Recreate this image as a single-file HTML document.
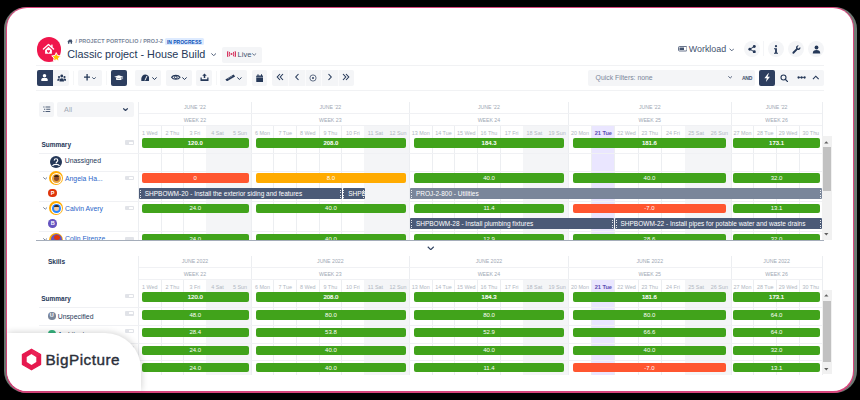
<!DOCTYPE html><html><head><meta charset="utf-8"><style>
html,body{margin:0;padding:0;}
body{width:860px;height:400px;overflow:hidden;background:#000;position:relative;font-family:"Liberation Sans", sans-serif;color:#172b4d;}
</style></head><body>
<div style="position:absolute;left:3.8px;top:7px;width:853px;height:386.4px;background:#6f7873;border-radius:22px;"></div>
<div style="position:absolute;left:6px;top:6.8px;width:848.3px;height:385.8px;background:#d9457c;border-radius:21px;"></div>
<div style="position:absolute;left:7.2px;top:8px;width:845.9px;height:383.3px;background:#fff;border-radius:20px;"></div>
<div style="position:absolute;left:36.8px;top:37.2px;width:24.2px;height:24.4px;border-radius:50%;background:#f0164c;"></div>
<svg style="position:absolute;left:42px;top:43px" width="13" height="12" viewBox="0 0 13 12">
<path d="M1.4 6 L6.5 1.4 L11.6 6" fill="none" stroke="#fff" stroke-width="1.3" stroke-linecap="round" stroke-linejoin="round"/>
<rect x="9.2" y="1.6" width="1.4" height="2.8" fill="#fff"/>
<path d="M3.1 6.9 L6.5 3.8 L9.9 6.9 V10.8 H3.1Z" fill="#fff"/>
<path d="M6.5 9.9 C4.5 8.6 4.7 7.0 5.7 7.0 C6.1 7.0 6.5 7.4 6.5 7.4 C6.5 7.4 6.9 7.0 7.3 7.0 C8.3 7.0 8.5 8.6 6.5 9.9Z" fill="#f0164c"/>
</svg>
<svg style="position:absolute;left:51.2px;top:52px" width="10.5" height="10" viewBox="0 0 24 23"><path d="M12 1.5l3.1 6.6 7.2.9-5.3 4.9 1.4 7.1L12 17.5 5.6 21l1.4-7.1L1.7 9l7.2-.9z" fill="#ffc400" stroke="#fff" stroke-width="2.2" stroke-linejoin="round"/></svg>
<svg style="position:absolute;left:67.1px;top:38.9px" width="6" height="4.9" viewBox="0 0 12 10"><path d="M6 0.3 L0.2 5 H1.8 V9.8 H4.6 V6.8 H7.4 V9.8 H10.2 V5 H11.8 L10 3.5 V0.8 H8.6 V2.3Z" fill="#42526e"/></svg>
<div style="position:absolute;left:75.50px;top:37.00px;width:100.00px;height:8.00px;line-height:8.00px;white-space:nowrap;font-size:5.4px;font-weight:bold;color:#7a869a;letter-spacing:0.08px">/ PROJECT PORTFOLIO / PROJ-2</div>
<div style="position:absolute;left:165px;top:37.5px;width:38.5px;height:7.3px;background:#deebff;border-radius:1.5px;color:#0b50b8;font-size:5px;font-weight:bold;line-height:8.4px;text-align:center;white-space:nowrap">IN PROGRESS</div>
<div style="position:absolute;left:67.30px;top:48.20px;width:150.00px;height:13.00px;line-height:13.00px;white-space:nowrap;font-size:10.8px;color:#253858;">Classic project - House Build</div>
<svg style="position:absolute;left:210.8px;top:52.6px" width="5.4" height="3.4" viewBox="0 0 10 6"><path d="M1.2 1.2 L5 4.8 L8.8 1.2" fill="none" stroke="#42526e" stroke-width="1.7" stroke-linecap="round"/></svg>
<div style="position:absolute;left:222px;top:46.8px;width:40px;height:15.8px;background:#f4f5f7;border-radius:2px"></div>
<svg style="position:absolute;left:227.4px;top:50.8px" width="9" height="6.2" viewBox="0 0 9 6.2">
<circle cx="4.5" cy="3.1" r="1" fill="#d6335e"/>
<path d="M2.6 0.9 Q1.6 3.1 2.6 5.3 M6.4 0.9 Q7.4 3.1 6.4 5.3" fill="none" stroke="#d6335e" stroke-width="1.1"/>
<path d="M1 0.3 Q-0.3 3.1 1 5.9 M8 0.3 Q9.3 3.1 8 5.9" fill="none" stroke="#d6335e" stroke-width="1.1"/>
</svg>
<div style="position:absolute;left:237.60px;top:47.00px;width:20.00px;height:15.00px;line-height:15.00px;white-space:nowrap;font-size:7.6px;color:#42526e;">Live</div>
<svg style="position:absolute;left:252.3px;top:53.4px" width="4.4" height="3" viewBox="0 0 10 6"><path d="M1.2 1.2 L5 4.8 L8.8 1.2" fill="none" stroke="#42526e" stroke-width="1.8" stroke-linecap="round"/></svg>
<svg style="position:absolute;left:677.5px;top:46px" width="9.5" height="5.5" viewBox="0 0 19 11"><rect x="1" y="1" width="17" height="9" rx="2" fill="none" stroke="#42526e" stroke-width="1.6"/><rect x="3" y="3" width="9" height="5" fill="#42526e"/></svg>
<div style="position:absolute;left:688.80px;top:41.70px;width:45.00px;height:15.00px;line-height:15.00px;white-space:nowrap;font-size:8.9px;color:#42526e;">Workload</div>
<svg style="position:absolute;left:728.5px;top:47.7px" width="5.5" height="3.5" viewBox="0 0 10 6"><path d="M1 1 L5 5 L9 1" fill="none" stroke="#42526e" stroke-width="1.6"/></svg>
<div style="position:absolute;left:743.6px;top:40.5px;width:16px;height:16px;border-radius:50%;background:#f4f5f7"></div>
<div style="position:absolute;left:768px;top:40.5px;width:16px;height:16px;border-radius:50%;background:#f4f5f7"></div>
<div style="position:absolute;left:788px;top:40.5px;width:16px;height:16px;border-radius:50%;background:#f4f5f7"></div>
<div style="position:absolute;left:808px;top:40.5px;width:16px;height:16px;border-radius:50%;background:#f4f5f7"></div>
<div style="position:absolute;left:763.20px;top:41.00px;width:0.80px;height:15.00px;background:#f4f5f7"></div>
<svg style="position:absolute;left:747.6px;top:45px" width="8.4" height="8.4" viewBox="0 0 16 16"><circle cx="12" cy="3" r="2.8" fill="#253858"/><circle cx="12" cy="13" r="2.8" fill="#253858"/><circle cx="3.5" cy="8" r="2.8" fill="#253858"/><path d="M12 3 L3.5 8 L12 13" fill="none" stroke="#253858" stroke-width="1.8"/></svg>
<svg style="position:absolute;left:773px;top:44.8px" width="6" height="9" viewBox="0 0 6 9"><circle cx="3" cy="1.2" r="1.1" fill="#253858"/><path d="M1 3.3 H3.9 V7.8 H5 V8.8 H1 V7.8 H2.1 V4.3 H1Z" fill="#253858"/></svg>
<svg style="position:absolute;left:791.5px;top:44.8px" width="9" height="9" viewBox="0 0 16 16"><path d="M14.5 3.5 L12 6 L10 5.6 L9.6 3.6 L12.1 1.1 C10 0.3 7.6 1.5 7.2 3.8 C7 4.7 7.2 5.5 7.5 6.2 L1.2 12.5 C0.5 13.2 0.5 14.3 1.2 15 C1.9 15.6 3 15.6 3.6 15 L9.9 8.6 C10.6 9 11.5 9.1 12.3 8.9 C14.5 8.4 15.5 5.8 14.5 3.5Z" fill="#253858"/></svg>
<svg style="position:absolute;left:811.5px;top:44.8px" width="9" height="9" viewBox="0 0 18 18"><circle cx="9" cy="5" r="3.8" fill="#253858"/><path d="M1.5 17 C1.5 11.5 4.5 10.2 9 10.2 C13.5 10.2 16.5 11.5 16.5 17Z" fill="#253858"/></svg>
<div style="position:absolute;left:36.00px;top:64.90px;width:788.00px;height:1.00px;background:#f1f2f4"></div>
<div style="position:absolute;left:36.00px;top:89.90px;width:788.00px;height:1.00px;background:#f1f2f4"></div>
<div style="position:absolute;left:37px;top:70px;width:32.00px;height:15.8px;background:#f4f5f7;border-radius:2px"></div>
<div style="position:absolute;left:36.7px;top:69.8px;width:16.2px;height:16.1px;background:#2d3e5f;border-radius:2px 0 0 2px"></div>
<svg style="position:absolute;left:41.3px;top:73.9px" width="7" height="7" viewBox="0 0 7 7"><circle cx="3.5" cy="1.75" r="1.75" fill="#fff"/><path d="M0.3 7 V5.6 C0.3 4.5 1.2 4 2.1 4 H4.9 C5.8 4 6.7 4.5 6.7 5.6 V7Z" fill="#fff"/></svg>
<svg style="position:absolute;left:56.5px;top:73.5px" width="9.5" height="8.5" viewBox="0 0 19 17"><circle cx="9.5" cy="4" r="2.8" fill="#253858"/><circle cx="4" cy="6" r="2.2" fill="#253858"/><circle cx="15" cy="6" r="2.2" fill="#253858"/><path d="M5 15 C5 10.5 6.5 8.5 9.5 8.5 C12.5 8.5 14 10.5 14 15Z" fill="#253858"/><path d="M0.5 13.5 C0.5 10 2 9 4 9 C5 9 5.5 9.3 5.8 9.6 C4.9 10.8 4.5 12 4.5 13.5Z M18.5 13.5 C18.5 10 17 9 15 9 C14 9 13.5 9.3 13.2 9.6 C14.1 10.8 14.5 12 14.5 13.5Z" fill="#253858"/></svg>
<div style="position:absolute;left:73.40px;top:71.00px;width:0.80px;height:14.00px;background:#f5f6f7"></div>
<div style="position:absolute;left:78px;top:70px;width:24.00px;height:15.8px;background:#f4f5f7;border-radius:2px"></div>
<svg style="position:absolute;left:84px;top:74.4px" width="6.2" height="6.4" viewBox="0 0 6.2 6.4"><path d="M3.1 0 V6.4 M0 3.2 H6.2" stroke="#253858" stroke-width="1.3"/></svg>
<svg style="position:absolute;left:92.1px;top:76.9px" width="4" height="2.6" viewBox="0 0 10 6"><path d="M1.2 1.2 L5 4.8 L8.8 1.2" fill="none" stroke="#253858" stroke-width="2.0" stroke-linecap="round" stroke-linejoin="round"/></svg>
<div style="position:absolute;left:106.20px;top:71.00px;width:0.80px;height:14.00px;background:#f5f6f7"></div>
<div style="position:absolute;left:111px;top:70px;width:16.00px;height:15.8px;background:#2d3e5f;border-radius:2px"></div>
<svg style="position:absolute;left:114.4px;top:74.8px" width="9.6" height="5.6" viewBox="0 0 19.2 11.2"><path d="M9.6 0.4 L18.8 3.6 L9.6 6.8 L0.4 3.6Z" fill="#fff"/><path d="M4.2 5.6 V9 C4.2 10.2 7 10.9 9.6 10.9 C12.2 10.9 15 10.2 15 9 V5.6 L9.6 7.6Z" fill="#fff"/><path d="M17.2 4.2 V8.4" stroke="#fff" stroke-width="1.1"/></svg>
<div style="position:absolute;left:135.2px;top:70px;width:25.60px;height:15.8px;background:#f4f5f7;border-radius:2px"></div>
<svg style="position:absolute;left:140.8px;top:73.8px" width="8.6" height="7.2" viewBox="0 0 17.2 14.4"><path d="M0.6 13.8 V9.5 C0.6 4.6 4.3 0.8 8.6 0.8 C12.9 0.8 16.6 4.6 16.6 9.5 V13.8Z" fill="#253858"/><path d="M8.2 12.2 L11.6 4.6" stroke="#f4f5f7" stroke-width="2" stroke-linecap="round"/></svg>
<svg style="position:absolute;left:151.5px;top:77px" width="5" height="3.2" viewBox="0 0 10 6"><path d="M1.2 1.2 L5 4.8 L8.8 1.2" fill="none" stroke="#253858" stroke-width="2.0" stroke-linecap="round" stroke-linejoin="round"/></svg>
<div style="position:absolute;left:165.5px;top:70px;width:26.10px;height:15.8px;background:#f4f5f7;border-radius:2px"></div>
<svg style="position:absolute;left:171px;top:74.3px" width="9.6" height="6.6" viewBox="0 0 19.2 13.2"><path d="M1.2 6.6 C4.2 1.4 15 1.4 18 6.6 C15 11.8 4.2 11.8 1.2 6.6Z" fill="none" stroke="#253858" stroke-width="2.4"/><circle cx="9.6" cy="6.6" r="2.6" fill="none" stroke="#253858" stroke-width="2"/></svg>
<svg style="position:absolute;left:181.7px;top:77px" width="5" height="3.2" viewBox="0 0 10 6"><path d="M1.2 1.2 L5 4.8 L8.8 1.2" fill="none" stroke="#253858" stroke-width="2.0" stroke-linecap="round" stroke-linejoin="round"/></svg>
<div style="position:absolute;left:196px;top:70px;width:16.00px;height:15.8px;background:#f4f5f7;border-radius:2px"></div>
<svg style="position:absolute;left:199.5px;top:73.3px" width="9" height="8.5" viewBox="0 0 18 17"><path d="M9 1 L4.5 5.5 H7.5 V10 H10.5 V5.5 H13.5Z" fill="#253858"/><path d="M1 9 V16 H17 V9 H14.5 V12.5 H3.5 V9Z" fill="#253858"/></svg>
<div style="position:absolute;left:215.50px;top:71.00px;width:0.80px;height:14.00px;background:#f5f6f7"></div>
<div style="position:absolute;left:220.2px;top:70px;width:27.10px;height:15.8px;background:#f4f5f7;border-radius:2px"></div>
<svg style="position:absolute;left:225.3px;top:73.6px" width="10.5" height="7.6" viewBox="0 0 21 15.2"><path d="M0.8 10.8 L17.2 1 L20.2 5.2 L3.8 14.6Z" fill="#253858"/><path d="M6.2 8.4 L7.4 10.2 M9.6 6.4 L10.8 8.2 M13 4.4 L14.2 6.2" stroke="#f4f5f7" stroke-width="1"/></svg>
<svg style="position:absolute;left:237.3px;top:76.6px" width="4.8" height="3.2" viewBox="0 0 10 6"><path d="M1.2 1.2 L5 4.8 L8.8 1.2" fill="none" stroke="#253858" stroke-width="2.0" stroke-linecap="round" stroke-linejoin="round"/></svg>
<div style="position:absolute;left:251.6px;top:70px;width:15.70px;height:15.8px;background:#f4f5f7;border-radius:2px"></div>
<svg style="position:absolute;left:255.7px;top:73.5px" width="7.5" height="8.5" viewBox="0 0 15 17"><rect x="0.5" y="3" width="14" height="13.5" rx="1.5" fill="#253858"/><rect x="3" y="0.5" width="2" height="4" fill="#253858"/><rect x="10" y="0.5" width="2" height="4" fill="#253858"/><rect x="0.5" y="5.8" width="14" height="1" fill="#f4f5f7"/></svg>
<div style="position:absolute;left:272.2px;top:70px;width:81.80px;height:15.8px;background:#f4f5f7;border-radius:2px"></div>
<div style="position:absolute;left:288.00px;top:70.00px;width:1.00px;height:15.80px;background:#fbfbfc"></div>
<div style="position:absolute;left:304.50px;top:70.00px;width:1.00px;height:15.80px;background:#fbfbfc"></div>
<div style="position:absolute;left:321.00px;top:70.00px;width:1.00px;height:15.80px;background:#fbfbfc"></div>
<div style="position:absolute;left:337.50px;top:70.00px;width:1.00px;height:15.80px;background:#fbfbfc"></div>
<svg style="position:absolute;left:275.8px;top:73.3px" width="8" height="8" viewBox="0 0 16 16"><path d="M8 2 L2.5 8 L8 14 M14 2 L8.5 8 L14 14" fill="none" stroke="#253858" stroke-width="2.2"/></svg>
<svg style="position:absolute;left:293.5px;top:73.3px" width="6" height="8" viewBox="0 0 12 16"><path d="M9 2 L3.5 8 L9 14" fill="none" stroke="#253858" stroke-width="2.2"/></svg>
<svg style="position:absolute;left:308.6px;top:73.5px" width="8" height="8" viewBox="0 0 16 16"><circle cx="8" cy="8" r="6.2" fill="none" stroke="#253858" stroke-width="1.4"/><circle cx="8" cy="8" r="1.9" fill="#253858"/></svg>
<svg style="position:absolute;left:326.5px;top:73.3px" width="6" height="8" viewBox="0 0 12 16"><path d="M3 2 L8.5 8 L3 14" fill="none" stroke="#253858" stroke-width="2.2"/></svg>
<svg style="position:absolute;left:341.5px;top:73.3px" width="8" height="8" viewBox="0 0 16 16"><path d="M2 2 L7.5 8 L2 14 M8 2 L13.5 8 L8 14" fill="none" stroke="#253858" stroke-width="2.2"/></svg>
<div style="position:absolute;left:588.3px;top:70px;width:166.6px;height:15.5px;background:#f4f5f7;border-radius:2px"></div>
<div style="position:absolute;left:595.60px;top:70.00px;width:60.00px;height:15.50px;line-height:15.50px;white-space:nowrap;font-size:6.85px;color:#7a869a;">Quick Filters: none</div>
<svg style="position:absolute;left:727.6px;top:76.4px" width="4.4" height="2.6" viewBox="0 0 10 6"><path d="M1.2 1.2 L5 4.8 L8.8 1.2" fill="none" stroke="#42526e" stroke-width="2.0" stroke-linecap="round" stroke-linejoin="round"/></svg>
<div style="position:absolute;left:739.30px;top:70.60px;width:15.50px;height:15.50px;line-height:15.50px;white-space:nowrap;font-size:5px;font-weight:bold;color:#42526e;text-align:center;letter-spacing:-0.2px">AND</div>
<div style="position:absolute;left:759px;top:70px;width:65px;height:15.8px;background:#f4f5f7;border-radius:2px"></div>
<div style="position:absolute;left:759px;top:70px;width:15.8px;height:15.8px;background:#2d3e5f;border-radius:2px"></div>
<svg style="position:absolute;left:763.6px;top:72.8px" width="6.4" height="9.2" viewBox="0 0 12.8 18.4"><path d="M8.6 0.4 L0.8 10.4 H5.6 L3.8 18 L12 7.6 H7.2 L9.8 0.4Z" fill="#fff"/></svg>
<svg style="position:absolute;left:779.7px;top:73.8px" width="8.5" height="8.5" viewBox="0 0 17 17"><circle cx="7" cy="7" r="5" fill="none" stroke="#253858" stroke-width="2.2"/><path d="M10.5 10.5 L15.5 15.5" stroke="#253858" stroke-width="2.4" stroke-linecap="round"/></svg>
<svg style="position:absolute;left:797.2px;top:75.9px" width="9.2" height="3" viewBox="0 0 18 6"><circle cx="3" cy="3" r="2.3" fill="#253858"/><circle cx="9" cy="3" r="2.3" fill="#253858"/><circle cx="15" cy="3" r="2.3" fill="#253858"/><path d="M3 3 H15" stroke="#253858" stroke-width="1.4"/></svg>
<svg style="position:absolute;left:812px;top:74.8px" width="7.6" height="4.8" viewBox="0 0 16 10"><path d="M2 8.5 L8 2.5 L14 8.5" fill="none" stroke="#253858" stroke-width="2.4"/></svg>
<div style="position:absolute;left:39.1px;top:101.7px;width:15px;height:15px;background:#f4f5f7;border-radius:2px"></div>
<svg style="position:absolute;left:43px;top:105.5px" width="7.5" height="6.5" viewBox="0 0 15 13"><path d="M5 2 H14.5 M6.5 6.5 H14.5 M5 11 H14.5" stroke="#253858" stroke-width="1.6"/><path d="M0.5 2 H3 M2 6.5 H4.5 M0.5 11 H3" stroke="#253858" stroke-width="1.6"/></svg>
<div style="position:absolute;left:57px;top:101.7px;width:77px;height:15px;background:#f4f5f7;border-radius:2px"></div>
<div style="position:absolute;left:64.10px;top:101.90px;width:20.00px;height:15.00px;line-height:15.00px;white-space:nowrap;font-size:7.2px;color:#a0a8b5;">All</div>
<svg style="position:absolute;left:123.3px;top:107.8px" width="5" height="3.2" viewBox="0 0 10 6"><path d="M1.2 1.2 L5 4.8 L8.8 1.2" fill="none" stroke="#344563" stroke-width="2.4" stroke-linecap="round" stroke-linejoin="round"/></svg>
<div style="position:absolute;left:206.18px;top:125.50px;width:22.56px;height:114.50px;background:#f4f5f7"></div>
<div style="position:absolute;left:228.74px;top:125.50px;width:22.56px;height:114.50px;background:#f4f5f7"></div>
<div style="position:absolute;left:364.16px;top:125.50px;width:22.57px;height:114.50px;background:#f4f5f7"></div>
<div style="position:absolute;left:386.73px;top:125.50px;width:22.57px;height:114.50px;background:#f4f5f7"></div>
<div style="position:absolute;left:523.01px;top:125.50px;width:22.74px;height:114.50px;background:#f4f5f7"></div>
<div style="position:absolute;left:545.76px;top:125.50px;width:22.74px;height:114.50px;background:#f4f5f7"></div>
<div style="position:absolute;left:591.71px;top:125.50px;width:23.21px;height:114.50px;background:#eae6ff"></div>
<div style="position:absolute;left:684.57px;top:125.50px;width:23.21px;height:114.50px;background:#f4f5f7"></div>
<div style="position:absolute;left:707.79px;top:125.50px;width:23.21px;height:114.50px;background:#f4f5f7"></div>
<div style="position:absolute;left:138.00px;top:102.00px;width:1.00px;height:138.00px;background:#eceef1"></div>
<div style="position:absolute;left:250.80px;top:102.00px;width:1.00px;height:138.00px;background:#eceef1"></div>
<div style="position:absolute;left:408.80px;top:102.00px;width:1.00px;height:138.00px;background:#eceef1"></div>
<div style="position:absolute;left:568.00px;top:102.00px;width:1.00px;height:138.00px;background:#eceef1"></div>
<div style="position:absolute;left:730.50px;top:102.00px;width:1.00px;height:138.00px;background:#eceef1"></div>
<div style="position:absolute;left:821.70px;top:102.00px;width:1.00px;height:138.00px;background:#eceef1"></div>
<div style="position:absolute;left:138.50px;top:113.00px;width:683.70px;height:1.00px;background:#f0f1f4"></div>
<div style="position:absolute;left:138.50px;top:125.00px;width:683.70px;height:1.00px;background:#f0f1f4"></div>
<div style="position:absolute;left:160.56px;top:125.50px;width:1.00px;height:114.50px;background:#eceef1"></div>
<div style="position:absolute;left:183.12px;top:125.50px;width:1.00px;height:114.50px;background:#eceef1"></div>
<div style="position:absolute;left:273.37px;top:125.50px;width:1.00px;height:114.50px;background:#eceef1"></div>
<div style="position:absolute;left:295.94px;top:125.50px;width:1.00px;height:114.50px;background:#eceef1"></div>
<div style="position:absolute;left:318.51px;top:125.50px;width:1.00px;height:114.50px;background:#eceef1"></div>
<div style="position:absolute;left:341.09px;top:125.50px;width:1.00px;height:114.50px;background:#eceef1"></div>
<div style="position:absolute;left:431.54px;top:125.50px;width:1.00px;height:114.50px;background:#eceef1"></div>
<div style="position:absolute;left:454.29px;top:125.50px;width:1.00px;height:114.50px;background:#eceef1"></div>
<div style="position:absolute;left:477.03px;top:125.50px;width:1.00px;height:114.50px;background:#eceef1"></div>
<div style="position:absolute;left:499.77px;top:125.50px;width:1.00px;height:114.50px;background:#eceef1"></div>
<div style="position:absolute;left:591.21px;top:125.50px;width:1.00px;height:114.50px;background:#eceef1"></div>
<div style="position:absolute;left:614.43px;top:125.50px;width:1.00px;height:114.50px;background:#eceef1"></div>
<div style="position:absolute;left:637.64px;top:125.50px;width:1.00px;height:114.50px;background:#eceef1"></div>
<div style="position:absolute;left:660.86px;top:125.50px;width:1.00px;height:114.50px;background:#eceef1"></div>
<div style="position:absolute;left:753.30px;top:125.50px;width:1.00px;height:114.50px;background:#eceef1"></div>
<div style="position:absolute;left:776.10px;top:125.50px;width:1.00px;height:114.50px;background:#eceef1"></div>
<div style="position:absolute;left:798.90px;top:125.50px;width:1.00px;height:114.50px;background:#eceef1"></div>
<div style="position:absolute;left:138.50px;top:102.00px;width:112.80px;height:11.50px;line-height:11.50px;white-space:nowrap;text-align:center;font-size:5.2px;color:#a0a8b4;">JUNE '22</div>
<div style="position:absolute;left:138.50px;top:113.50px;width:112.80px;height:12.00px;line-height:12.00px;white-space:nowrap;text-align:center;font-size:5.2px;color:#a0a8b4;">WEEK 22</div>
<div style="position:absolute;left:251.30px;top:102.00px;width:158.00px;height:11.50px;line-height:11.50px;white-space:nowrap;text-align:center;font-size:5.2px;color:#a0a8b4;">JUNE '22</div>
<div style="position:absolute;left:251.30px;top:113.50px;width:158.00px;height:12.00px;line-height:12.00px;white-space:nowrap;text-align:center;font-size:5.2px;color:#a0a8b4;">WEEK 23</div>
<div style="position:absolute;left:409.30px;top:102.00px;width:159.20px;height:11.50px;line-height:11.50px;white-space:nowrap;text-align:center;font-size:5.2px;color:#a0a8b4;">JUNE '22</div>
<div style="position:absolute;left:409.30px;top:113.50px;width:159.20px;height:12.00px;line-height:12.00px;white-space:nowrap;text-align:center;font-size:5.2px;color:#a0a8b4;">WEEK 24</div>
<div style="position:absolute;left:568.50px;top:102.00px;width:162.50px;height:11.50px;line-height:11.50px;white-space:nowrap;text-align:center;font-size:5.2px;color:#a0a8b4;">JUNE '22</div>
<div style="position:absolute;left:568.50px;top:113.50px;width:162.50px;height:12.00px;line-height:12.00px;white-space:nowrap;text-align:center;font-size:5.2px;color:#a0a8b4;">WEEK 25</div>
<div style="position:absolute;left:731.00px;top:102.00px;width:91.20px;height:11.50px;line-height:11.50px;white-space:nowrap;text-align:center;font-size:5.2px;color:#a0a8b4;">JUNE '22</div>
<div style="position:absolute;left:731.00px;top:113.50px;width:91.20px;height:12.00px;line-height:12.00px;white-space:nowrap;text-align:center;font-size:5.2px;color:#a0a8b4;">WEEK 26</div>
<div style="position:absolute;left:138.50px;top:127.70px;width:22.56px;height:11.50px;line-height:11.50px;white-space:nowrap;text-align:center;font-size:5.4px;color:#b0b7c2;">1 Wed</div>
<div style="position:absolute;left:161.06px;top:127.70px;width:22.56px;height:11.50px;line-height:11.50px;white-space:nowrap;text-align:center;font-size:5.4px;color:#b0b7c2;">2 Thu</div>
<div style="position:absolute;left:183.62px;top:127.70px;width:22.56px;height:11.50px;line-height:11.50px;white-space:nowrap;text-align:center;font-size:5.4px;color:#b0b7c2;">3 Fri</div>
<div style="position:absolute;left:206.18px;top:127.70px;width:22.56px;height:11.50px;line-height:11.50px;white-space:nowrap;text-align:center;font-size:5.4px;color:#b0b7c2;">4 Sat</div>
<div style="position:absolute;left:228.74px;top:127.70px;width:22.56px;height:11.50px;line-height:11.50px;white-space:nowrap;text-align:center;font-size:5.4px;color:#b0b7c2;">5 Sun</div>
<div style="position:absolute;left:251.30px;top:127.70px;width:22.57px;height:11.50px;line-height:11.50px;white-space:nowrap;text-align:center;font-size:5.4px;color:#b0b7c2;">6 Mon</div>
<div style="position:absolute;left:273.87px;top:127.70px;width:22.57px;height:11.50px;line-height:11.50px;white-space:nowrap;text-align:center;font-size:5.4px;color:#b0b7c2;">7 Tue</div>
<div style="position:absolute;left:296.44px;top:127.70px;width:22.57px;height:11.50px;line-height:11.50px;white-space:nowrap;text-align:center;font-size:5.4px;color:#b0b7c2;">8 Wed</div>
<div style="position:absolute;left:319.01px;top:127.70px;width:22.57px;height:11.50px;line-height:11.50px;white-space:nowrap;text-align:center;font-size:5.4px;color:#b0b7c2;">9 Thu</div>
<div style="position:absolute;left:341.59px;top:127.70px;width:22.57px;height:11.50px;line-height:11.50px;white-space:nowrap;text-align:center;font-size:5.4px;color:#b0b7c2;">10 Fri</div>
<div style="position:absolute;left:364.16px;top:127.70px;width:22.57px;height:11.50px;line-height:11.50px;white-space:nowrap;text-align:center;font-size:5.4px;color:#b0b7c2;">11 Sat</div>
<div style="position:absolute;left:386.73px;top:127.70px;width:22.57px;height:11.50px;line-height:11.50px;white-space:nowrap;text-align:center;font-size:5.4px;color:#b0b7c2;">12 Sun</div>
<div style="position:absolute;left:409.30px;top:127.70px;width:22.74px;height:11.50px;line-height:11.50px;white-space:nowrap;text-align:center;font-size:5.4px;color:#b0b7c2;">13 Mon</div>
<div style="position:absolute;left:432.04px;top:127.70px;width:22.74px;height:11.50px;line-height:11.50px;white-space:nowrap;text-align:center;font-size:5.4px;color:#b0b7c2;">14 Tue</div>
<div style="position:absolute;left:454.79px;top:127.70px;width:22.74px;height:11.50px;line-height:11.50px;white-space:nowrap;text-align:center;font-size:5.4px;color:#b0b7c2;">15 Wed</div>
<div style="position:absolute;left:477.53px;top:127.70px;width:22.74px;height:11.50px;line-height:11.50px;white-space:nowrap;text-align:center;font-size:5.4px;color:#b0b7c2;">16 Thu</div>
<div style="position:absolute;left:500.27px;top:127.70px;width:22.74px;height:11.50px;line-height:11.50px;white-space:nowrap;text-align:center;font-size:5.4px;color:#b0b7c2;">17 Fri</div>
<div style="position:absolute;left:523.01px;top:127.70px;width:22.74px;height:11.50px;line-height:11.50px;white-space:nowrap;text-align:center;font-size:5.4px;color:#b0b7c2;">18 Sat</div>
<div style="position:absolute;left:545.76px;top:127.70px;width:22.74px;height:11.50px;line-height:11.50px;white-space:nowrap;text-align:center;font-size:5.4px;color:#b0b7c2;">19 Sun</div>
<div style="position:absolute;left:568.50px;top:127.70px;width:23.21px;height:11.50px;line-height:11.50px;white-space:nowrap;text-align:center;font-size:5.4px;color:#b0b7c2;">20 Mon</div>
<div style="position:absolute;left:591.71px;top:127.70px;width:23.21px;height:11.50px;line-height:11.50px;white-space:nowrap;text-align:center;font-size:5.6px;color:#5e4db2;font-weight:bold;">21 Tue</div>
<div style="position:absolute;left:614.93px;top:127.70px;width:23.21px;height:11.50px;line-height:11.50px;white-space:nowrap;text-align:center;font-size:5.4px;color:#b0b7c2;">22 Wed</div>
<div style="position:absolute;left:638.14px;top:127.70px;width:23.21px;height:11.50px;line-height:11.50px;white-space:nowrap;text-align:center;font-size:5.4px;color:#b0b7c2;">23 Thu</div>
<div style="position:absolute;left:661.36px;top:127.70px;width:23.21px;height:11.50px;line-height:11.50px;white-space:nowrap;text-align:center;font-size:5.4px;color:#b0b7c2;">24 Fri</div>
<div style="position:absolute;left:684.57px;top:127.70px;width:23.21px;height:11.50px;line-height:11.50px;white-space:nowrap;text-align:center;font-size:5.4px;color:#b0b7c2;">25 Sat</div>
<div style="position:absolute;left:707.79px;top:127.70px;width:23.21px;height:11.50px;line-height:11.50px;white-space:nowrap;text-align:center;font-size:5.4px;color:#b0b7c2;">26 Sun</div>
<div style="position:absolute;left:731.00px;top:127.70px;width:22.80px;height:11.50px;line-height:11.50px;white-space:nowrap;text-align:center;font-size:5.4px;color:#b0b7c2;">27 Mon</div>
<div style="position:absolute;left:753.80px;top:127.70px;width:22.80px;height:11.50px;line-height:11.50px;white-space:nowrap;text-align:center;font-size:5.4px;color:#b0b7c2;">28 Tue</div>
<div style="position:absolute;left:776.60px;top:127.70px;width:22.80px;height:11.50px;line-height:11.50px;white-space:nowrap;text-align:center;font-size:5.4px;color:#b0b7c2;">29 Wed</div>
<div style="position:absolute;left:799.40px;top:127.70px;width:22.80px;height:11.50px;line-height:11.50px;white-space:nowrap;text-align:center;font-size:5.4px;color:#b0b7c2;">30 Thu</div>
<div style="position:absolute;left:41.40px;top:138.70px;width:40.00px;height:11.00px;line-height:11.00px;white-space:nowrap;font-size:6.5px;font-weight:bold;color:#253858;">Summary</div>
<div style="position:absolute;left:124.9px;top:140.4px;width:9px;height:4.7px;border-radius:1px;background:#e1e3e8"><div style="position:absolute;left:4px;top:1.3px;width:4px;height:2.1px;background:#fff;border-radius:0.5px"></div></div>
<div style="position:absolute;left:38.70px;top:153.00px;width:100.00px;height:0.80px;background:#f0f1f4"></div>
<svg style="position:absolute;left:50px;top:156px" width="12" height="12" viewBox="0 0 24 24"><circle cx="12" cy="12" r="12" fill="#253858"/><path d="M8.5 9 C8.5 6.8 10 5.5 12 5.5 C14 5.5 15.5 6.8 15.5 8.8 C15.5 11 13 11.5 12.5 13.5 V14.5" fill="none" stroke="#fff" stroke-width="2.4"/><path d="M5 20 C6 17.5 8.5 16.8 12 16.8 C15.5 16.8 18 17.5 19 20" fill="none" stroke="#fff" stroke-width="2.2"/></svg>
<div style="position:absolute;left:64.80px;top:154.60px;width:50.00px;height:11.00px;line-height:11.00px;white-space:nowrap;font-size:6.85px;color:#253858;">Unassigned</div>
<div style="position:absolute;left:38.70px;top:171.00px;width:100.00px;height:0.80px;background:#f0f1f4"></div>
<svg style="position:absolute;left:42.5px;top:177.20000000000002px" width="4.5" height="2.8" viewBox="0 0 10 6"><path d="M1.2 1.2 L5 4.8 L8.8 1.2" fill="none" stroke="#6b778c" stroke-width="2.0" stroke-linecap="round" stroke-linejoin="round"/></svg>
<div style="position:absolute;left:49.3px;top:171.4px;width:14px;height:14px;border-radius:50%;background:#ffab00"></div>
<div style="position:absolute;left:50.8px;top:172.9px;width:11px;height:11px;border-radius:50%;background:#fff"></div>
<div style="position:absolute;left:51.5px;top:173.6px;width:9.6px;height:9.6px;border-radius:50%;background:#e8a23a;overflow:hidden"><div style="position:absolute;left:2.3px;top:2.6px;width:5px;height:5px;border-radius:50%;background:#8a4a2b"></div><div style="position:absolute;left:2px;top:1.5px;width:5.6px;height:2.2px;border-radius:3px 3px 0 0;background:#3b2316"></div></div>
<div style="position:absolute;left:65.00px;top:172.90px;width:60.00px;height:11.00px;line-height:11.00px;white-space:nowrap;font-size:6.85px;color:#2a65c8;">Angela Ha...</div>
<div style="position:absolute;left:124.9px;top:175.60000000000002px;width:9px;height:4.7px;border-radius:1px;background:#e1e3e8"><div style="position:absolute;left:4px;top:1.3px;width:4px;height:2.1px;background:#fff;border-radius:0.5px"></div></div>
<div style="position:absolute;left:48.4px;top:188.89999999999998px;width:8.6px;height:8.6px;border-radius:50%;background:#de350b;color:#fff;font-size:5.5px;font-weight:bold;line-height:8.6px;text-align:center">P</div>
<div style="position:absolute;left:38.70px;top:201.00px;width:100.00px;height:0.80px;background:#f0f1f4"></div>
<svg style="position:absolute;left:42.5px;top:207.10000000000002px" width="4.5" height="2.8" viewBox="0 0 10 6"><path d="M1.2 1.2 L5 4.8 L8.8 1.2" fill="none" stroke="#6b778c" stroke-width="2.0" stroke-linecap="round" stroke-linejoin="round"/></svg>
<div style="position:absolute;left:49.3px;top:201.3px;width:14px;height:14px;border-radius:50%;background:#ffab00"></div>
<div style="position:absolute;left:50.8px;top:202.8px;width:11px;height:11px;border-radius:50%;background:#fff"></div>
<div style="position:absolute;left:51.5px;top:203.5px;width:9.6px;height:9.6px;border-radius:50%;background:#2684ff;overflow:hidden"><div style="position:absolute;left:2.3px;top:2.6px;width:5px;height:5px;border-radius:50%;background:#f2c9a0"></div><div style="position:absolute;left:2px;top:1.5px;width:5.6px;height:2.2px;border-radius:3px 3px 0 0;background:#3b2a20"></div></div>
<div style="position:absolute;left:65.00px;top:202.80px;width:60.00px;height:11.00px;line-height:11.00px;white-space:nowrap;font-size:6.85px;color:#2a65c8;">Calvin Avery</div>
<div style="position:absolute;left:124.9px;top:205.50000000000003px;width:9px;height:4.7px;border-radius:1px;background:#e1e3e8"><div style="position:absolute;left:4px;top:1.3px;width:4px;height:2.1px;background:#fff;border-radius:0.5px"></div></div>
<div style="position:absolute;left:48.4px;top:219.29999999999998px;width:8.6px;height:8.6px;border-radius:50%;background:#6554c0;color:#fff;font-size:5.5px;font-weight:bold;line-height:8.6px;text-align:center">B</div>
<div style="position:absolute;left:38.70px;top:231.30px;width:100.00px;height:0.80px;background:#f0f1f4"></div>
<div style="position:absolute;left:0;top:0;width:140px;height:239.5px;overflow:hidden">
<svg style="position:absolute;left:42.5px;top:238.3px" width="4.5" height="2.8" viewBox="0 0 10 6"><path d="M1.2 1.2 L5 4.8 L8.8 1.2" fill="none" stroke="#6b778c" stroke-width="2.0" stroke-linecap="round" stroke-linejoin="round"/></svg>
<div style="position:absolute;left:49.3px;top:232.5px;width:14px;height:14px;border-radius:50%;background:#ffab00"></div>
<div style="position:absolute;left:50.8px;top:234px;width:11px;height:11px;border-radius:50%;background:#6554c0"></div>
<div style="position:absolute;left:53.5px;top:235px;width:6px;height:5px;border-radius:50%;background:#de350b"></div>
<div style="position:absolute;left:65.00px;top:232.60px;width:60.00px;height:11.00px;line-height:11.00px;white-space:nowrap;font-size:6.85px;color:#2a65c8;">Colin Firenze</div>
<div style="position:absolute;left:124.9px;top:236.5px;width:9px;height:4.7px;border-radius:1px;background:#e1e3e8"></div>
</div>
<div style="position:absolute;left:138.50px;top:153.00px;width:683.70px;height:0.80px;background:#f0f1f4"></div>
<div style="position:absolute;left:138.50px;top:171.00px;width:683.70px;height:0.80px;background:#f0f1f4"></div>
<div style="position:absolute;left:138.50px;top:201.00px;width:683.70px;height:0.80px;background:#f0f1f4"></div>
<div style="position:absolute;left:138.50px;top:231.30px;width:683.70px;height:0.80px;background:#f0f1f4"></div>
<div style="position:absolute;left:141.70px;top:138.00px;width:107.20px;height:9.8px;line-height:9.8px;background:#41a31b;border-radius:2px;color:#fff;font-size:6px;font-weight:bold;text-align:center;text-indent:0;padding-top:0.6px;box-sizing:border-box;white-space:nowrap;">120.0</div>
<div style="position:absolute;left:255.90px;top:138.00px;width:150.10px;height:9.8px;line-height:9.8px;background:#41a31b;border-radius:2px;color:#fff;font-size:6px;font-weight:bold;text-align:center;text-indent:0;padding-top:0.6px;box-sizing:border-box;white-space:nowrap;">208.0</div>
<div style="position:absolute;left:414.20px;top:138.00px;width:149.80px;height:9.8px;line-height:9.8px;background:#41a31b;border-radius:2px;color:#fff;font-size:6px;font-weight:bold;text-align:center;text-indent:0;padding-top:0.6px;box-sizing:border-box;white-space:nowrap;">184.3</div>
<div style="position:absolute;left:573.10px;top:138.00px;width:152.60px;height:9.8px;line-height:9.8px;background:#41a31b;border-radius:2px;color:#fff;font-size:6px;font-weight:bold;text-align:center;text-indent:0;padding-top:0.6px;box-sizing:border-box;white-space:nowrap;">181.6</div>
<div style="position:absolute;left:733.00px;top:138.00px;width:87.20px;height:9.8px;line-height:9.8px;background:#41a31b;border-radius:2px;color:#fff;font-size:6px;font-weight:bold;text-align:center;text-indent:0;padding-top:0.6px;box-sizing:border-box;white-space:nowrap;">173.1</div>
<div style="position:absolute;left:141.70px;top:173.00px;width:107.20px;height:9.8px;line-height:9.8px;background:#ff5630;border-radius:2px;color:#fff;font-size:6.0px;font-weight:normal;text-align:center;text-indent:0;padding-top:0.6px;box-sizing:border-box;white-space:nowrap;">0</div>
<div style="position:absolute;left:255.90px;top:173.00px;width:150.10px;height:9.8px;line-height:9.8px;background:#ffab00;border-radius:2px;color:#fff;font-size:6.0px;font-weight:normal;text-align:center;text-indent:0;padding-top:0.6px;box-sizing:border-box;white-space:nowrap;">8.0</div>
<div style="position:absolute;left:414.20px;top:173.00px;width:149.80px;height:9.8px;line-height:9.8px;background:#41a31b;border-radius:2px;color:#fff;font-size:6.0px;font-weight:normal;text-align:center;text-indent:0;padding-top:0.6px;box-sizing:border-box;white-space:nowrap;">40.0</div>
<div style="position:absolute;left:573.10px;top:173.00px;width:152.60px;height:9.8px;line-height:9.8px;background:#41a31b;border-radius:2px;color:#fff;font-size:6.0px;font-weight:normal;text-align:center;text-indent:0;padding-top:0.6px;box-sizing:border-box;white-space:nowrap;">40.0</div>
<div style="position:absolute;left:733.00px;top:173.00px;width:87.20px;height:9.8px;line-height:9.8px;background:#41a31b;border-radius:2px;color:#fff;font-size:6.0px;font-weight:normal;text-align:center;text-indent:0;padding-top:0.6px;box-sizing:border-box;white-space:nowrap;">32.0</div>
<div style="position:absolute;left:139.20px;top:188.20px;width:202.80px;height:10.6px;background:#4b5a77;border-radius:1px;overflow:hidden;white-space:nowrap;color:#fff;font-size:6.5px;line-height:10.6px;"><div style="position:absolute;left:0.8px;top:1.4px;bottom:1px;width:0.9px;background:repeating-linear-gradient(to bottom,rgba(255,255,255,.85) 0 1.1px,transparent 1.1px 2.3px)"></div><div style="position:absolute;right:0.8px;top:1.4px;bottom:1px;width:0.9px;background:repeating-linear-gradient(to bottom,rgba(255,255,255,.85) 0 1.1px,transparent 1.1px 2.3px)"></div><span style="position:absolute;left:5.5px;top:0.8px">SHPBOWM-20 - Install the exterior siding and features</span></div>
<div style="position:absolute;left:342.70px;top:188.20px;width:22.00px;height:10.6px;background:#4b5a77;border-radius:1px;overflow:hidden;white-space:nowrap;color:#fff;font-size:6.5px;line-height:10.6px;"><div style="position:absolute;left:0.8px;top:1.4px;bottom:1px;width:0.9px;background:repeating-linear-gradient(to bottom,rgba(255,255,255,.85) 0 1.1px,transparent 1.1px 2.3px)"></div><div style="position:absolute;right:0.8px;top:1.4px;bottom:1px;width:0.9px;background:repeating-linear-gradient(to bottom,rgba(255,255,255,.85) 0 1.1px,transparent 1.1px 2.3px)"></div><span style="position:absolute;left:5.5px;top:0.8px">SHPBOWM-21</span></div>
<div style="position:absolute;left:410.40px;top:188.20px;width:411.60px;height:10.6px;background:#7a869a;border-radius:1px;overflow:hidden;white-space:nowrap;color:#fff;font-size:6.5px;line-height:10.6px;"><div style="position:absolute;left:0.8px;top:1.4px;bottom:1px;width:0.9px;background:repeating-linear-gradient(to bottom,rgba(255,255,255,.85) 0 1.1px,transparent 1.1px 2.3px)"></div><div style="position:absolute;right:0.8px;top:1.4px;bottom:1px;width:0.9px;background:repeating-linear-gradient(to bottom,rgba(255,255,255,.85) 0 1.1px,transparent 1.1px 2.3px)"></div><span style="position:absolute;left:5.5px;top:0.8px">PROJ-2-800 - Utilities</span></div>
<div style="position:absolute;left:141.70px;top:203.70px;width:107.20px;height:9.8px;line-height:9.8px;background:#41a31b;border-radius:2px;color:#fff;font-size:6.0px;font-weight:normal;text-align:center;text-indent:0;padding-top:0.6px;box-sizing:border-box;white-space:nowrap;">24.0</div>
<div style="position:absolute;left:255.90px;top:203.70px;width:150.10px;height:9.8px;line-height:9.8px;background:#41a31b;border-radius:2px;color:#fff;font-size:6.0px;font-weight:normal;text-align:center;text-indent:0;padding-top:0.6px;box-sizing:border-box;white-space:nowrap;">40.0</div>
<div style="position:absolute;left:414.20px;top:203.70px;width:149.80px;height:9.8px;line-height:9.8px;background:#41a31b;border-radius:2px;color:#fff;font-size:6.0px;font-weight:normal;text-align:center;text-indent:0;padding-top:0.6px;box-sizing:border-box;white-space:nowrap;">11.4</div>
<div style="position:absolute;left:573.10px;top:203.70px;width:152.60px;height:9.8px;line-height:9.8px;background:#ff5630;border-radius:2px;color:#fff;font-size:6.0px;font-weight:normal;text-align:center;text-indent:0;padding-top:0.6px;box-sizing:border-box;white-space:nowrap;">-7.0</div>
<div style="position:absolute;left:733.00px;top:203.70px;width:87.20px;height:9.8px;line-height:9.8px;background:#41a31b;border-radius:2px;color:#fff;font-size:6.0px;font-weight:normal;text-align:center;text-indent:0;padding-top:0.6px;box-sizing:border-box;white-space:nowrap;">13.1</div>
<div style="position:absolute;left:410.40px;top:218.40px;width:203.50px;height:10.8px;background:#4b5a77;border-radius:1px;overflow:hidden;white-space:nowrap;color:#fff;font-size:6.5px;line-height:10.8px;"><div style="position:absolute;left:0.8px;top:1.4px;bottom:1px;width:0.9px;background:repeating-linear-gradient(to bottom,rgba(255,255,255,.85) 0 1.1px,transparent 1.1px 2.3px)"></div><div style="position:absolute;right:0.8px;top:1.4px;bottom:1px;width:0.9px;background:repeating-linear-gradient(to bottom,rgba(255,255,255,.85) 0 1.1px,transparent 1.1px 2.3px)"></div><span style="position:absolute;left:5.5px;top:0.8px">SHPBOWM-28 - Install plumbing fixtures</span></div>
<div style="position:absolute;left:615.00px;top:218.40px;width:206.60px;height:10.8px;background:#4b5a77;border-radius:1px;overflow:hidden;white-space:nowrap;color:#fff;font-size:6.5px;line-height:10.8px;"><div style="position:absolute;left:0.8px;top:1.4px;bottom:1px;width:0.9px;background:repeating-linear-gradient(to bottom,rgba(255,255,255,.85) 0 1.1px,transparent 1.1px 2.3px)"></div><div style="position:absolute;right:0.8px;top:1.4px;bottom:1px;width:0.9px;background:repeating-linear-gradient(to bottom,rgba(255,255,255,.85) 0 1.1px,transparent 1.1px 2.3px)"></div><span style="position:absolute;left:5.5px;top:0.8px">SHPBOWM-22 - Install pipes for potable water and waste drains</span></div>
<div style="position:absolute;left:0;top:0;width:860px;height:239.6px;overflow:hidden">
<div style="position:absolute;left:141.70px;top:234.00px;width:107.20px;height:9.8px;line-height:9.8px;background:#41a31b;border-radius:2px;color:#fff;font-size:6.0px;font-weight:normal;text-align:center;text-indent:0;padding-top:0.6px;box-sizing:border-box;white-space:nowrap;">24.0</div>
<div style="position:absolute;left:255.90px;top:234.00px;width:150.10px;height:9.8px;line-height:9.8px;background:#41a31b;border-radius:2px;color:#fff;font-size:6.0px;font-weight:normal;text-align:center;text-indent:0;padding-top:0.6px;box-sizing:border-box;white-space:nowrap;">40.0</div>
<div style="position:absolute;left:414.20px;top:234.00px;width:149.80px;height:9.8px;line-height:9.8px;background:#41a31b;border-radius:2px;color:#fff;font-size:6.0px;font-weight:normal;text-align:center;text-indent:0;padding-top:0.6px;box-sizing:border-box;white-space:nowrap;">12.9</div>
<div style="position:absolute;left:573.10px;top:234.00px;width:152.60px;height:9.8px;line-height:9.8px;background:#41a31b;border-radius:2px;color:#fff;font-size:6.0px;font-weight:normal;text-align:center;text-indent:0;padding-top:0.6px;box-sizing:border-box;white-space:nowrap;">28.6</div>
<div style="position:absolute;left:733.00px;top:234.00px;width:87.20px;height:9.8px;line-height:9.8px;background:#41a31b;border-radius:2px;color:#fff;font-size:6.0px;font-weight:normal;text-align:center;text-indent:0;padding-top:0.6px;box-sizing:border-box;white-space:nowrap;">32.0</div>
</div>
<div style="position:absolute;left:822.10px;top:136.10px;width:9.50px;height:103.50px;background:#f1f1f1"></div>
<div style="position:absolute;left:822.60px;top:146.80px;width:8.50px;height:44.70px;background:#c1c1c1"></div>
<svg style="position:absolute;left:824.3px;top:141px" width="4.6" height="2.6" viewBox="0 0 10 6"><path d="M0 6 L5 0.5 L10 6Z" fill="#606060"/></svg>
<svg style="position:absolute;left:824.3px;top:233px" width="4.6" height="2.6" viewBox="0 0 10 6"><path d="M0 0 L5 5.5 L10 0Z" fill="#606060"/></svg>
<div style="position:absolute;left:36.30px;top:239.60px;width:787.50px;height:1.00px;background:#a5adba"></div>
<svg style="position:absolute;left:427px;top:245.8px" width="7.5" height="4.5" viewBox="0 0 15 9"><path d="M1.5 1.5 L7.5 7.5 L13.5 1.5" fill="none" stroke="#344563" stroke-width="2.2"/></svg>
<div style="position:absolute;left:47.90px;top:255.50px;width:40.00px;height:11.00px;line-height:11.00px;white-space:nowrap;font-size:6.6px;font-weight:bold;color:#253858;">Skills</div>
<div style="position:absolute;left:206.18px;top:279.50px;width:22.56px;height:95.50px;background:#f4f5f7"></div>
<div style="position:absolute;left:228.74px;top:279.50px;width:22.56px;height:95.50px;background:#f4f5f7"></div>
<div style="position:absolute;left:364.16px;top:279.50px;width:22.57px;height:95.50px;background:#f4f5f7"></div>
<div style="position:absolute;left:386.73px;top:279.50px;width:22.57px;height:95.50px;background:#f4f5f7"></div>
<div style="position:absolute;left:523.01px;top:279.50px;width:22.74px;height:95.50px;background:#f4f5f7"></div>
<div style="position:absolute;left:545.76px;top:279.50px;width:22.74px;height:95.50px;background:#f4f5f7"></div>
<div style="position:absolute;left:591.71px;top:279.50px;width:23.21px;height:95.50px;background:#eae6ff"></div>
<div style="position:absolute;left:684.57px;top:279.50px;width:23.21px;height:95.50px;background:#f4f5f7"></div>
<div style="position:absolute;left:707.79px;top:279.50px;width:23.21px;height:95.50px;background:#f4f5f7"></div>
<div style="position:absolute;left:138.00px;top:256.00px;width:1.00px;height:119.00px;background:#eceef1"></div>
<div style="position:absolute;left:250.80px;top:256.00px;width:1.00px;height:119.00px;background:#eceef1"></div>
<div style="position:absolute;left:408.80px;top:256.00px;width:1.00px;height:119.00px;background:#eceef1"></div>
<div style="position:absolute;left:568.00px;top:256.00px;width:1.00px;height:119.00px;background:#eceef1"></div>
<div style="position:absolute;left:730.50px;top:256.00px;width:1.00px;height:119.00px;background:#eceef1"></div>
<div style="position:absolute;left:821.70px;top:256.00px;width:1.00px;height:119.00px;background:#eceef1"></div>
<div style="position:absolute;left:138.50px;top:267.00px;width:683.70px;height:1.00px;background:#f0f1f4"></div>
<div style="position:absolute;left:138.50px;top:279.00px;width:683.70px;height:1.00px;background:#f0f1f4"></div>
<div style="position:absolute;left:160.56px;top:279.50px;width:1.00px;height:95.50px;background:#eceef1"></div>
<div style="position:absolute;left:183.12px;top:279.50px;width:1.00px;height:95.50px;background:#eceef1"></div>
<div style="position:absolute;left:273.37px;top:279.50px;width:1.00px;height:95.50px;background:#eceef1"></div>
<div style="position:absolute;left:295.94px;top:279.50px;width:1.00px;height:95.50px;background:#eceef1"></div>
<div style="position:absolute;left:318.51px;top:279.50px;width:1.00px;height:95.50px;background:#eceef1"></div>
<div style="position:absolute;left:341.09px;top:279.50px;width:1.00px;height:95.50px;background:#eceef1"></div>
<div style="position:absolute;left:431.54px;top:279.50px;width:1.00px;height:95.50px;background:#eceef1"></div>
<div style="position:absolute;left:454.29px;top:279.50px;width:1.00px;height:95.50px;background:#eceef1"></div>
<div style="position:absolute;left:477.03px;top:279.50px;width:1.00px;height:95.50px;background:#eceef1"></div>
<div style="position:absolute;left:499.77px;top:279.50px;width:1.00px;height:95.50px;background:#eceef1"></div>
<div style="position:absolute;left:591.21px;top:279.50px;width:1.00px;height:95.50px;background:#eceef1"></div>
<div style="position:absolute;left:614.43px;top:279.50px;width:1.00px;height:95.50px;background:#eceef1"></div>
<div style="position:absolute;left:637.64px;top:279.50px;width:1.00px;height:95.50px;background:#eceef1"></div>
<div style="position:absolute;left:660.86px;top:279.50px;width:1.00px;height:95.50px;background:#eceef1"></div>
<div style="position:absolute;left:753.30px;top:279.50px;width:1.00px;height:95.50px;background:#eceef1"></div>
<div style="position:absolute;left:776.10px;top:279.50px;width:1.00px;height:95.50px;background:#eceef1"></div>
<div style="position:absolute;left:798.90px;top:279.50px;width:1.00px;height:95.50px;background:#eceef1"></div>
<div style="position:absolute;left:138.50px;top:256.00px;width:112.80px;height:11.50px;line-height:11.50px;white-space:nowrap;text-align:center;font-size:5.2px;color:#a0a8b4;">JUNE 2022</div>
<div style="position:absolute;left:138.50px;top:267.50px;width:112.80px;height:12.00px;line-height:12.00px;white-space:nowrap;text-align:center;font-size:5.2px;color:#a0a8b4;">WEEK 22</div>
<div style="position:absolute;left:251.30px;top:256.00px;width:158.00px;height:11.50px;line-height:11.50px;white-space:nowrap;text-align:center;font-size:5.2px;color:#a0a8b4;">JUNE 2022</div>
<div style="position:absolute;left:251.30px;top:267.50px;width:158.00px;height:12.00px;line-height:12.00px;white-space:nowrap;text-align:center;font-size:5.2px;color:#a0a8b4;">WEEK 23</div>
<div style="position:absolute;left:409.30px;top:256.00px;width:159.20px;height:11.50px;line-height:11.50px;white-space:nowrap;text-align:center;font-size:5.2px;color:#a0a8b4;">JUNE 2022</div>
<div style="position:absolute;left:409.30px;top:267.50px;width:159.20px;height:12.00px;line-height:12.00px;white-space:nowrap;text-align:center;font-size:5.2px;color:#a0a8b4;">WEEK 24</div>
<div style="position:absolute;left:568.50px;top:256.00px;width:162.50px;height:11.50px;line-height:11.50px;white-space:nowrap;text-align:center;font-size:5.2px;color:#a0a8b4;">JUNE 2022</div>
<div style="position:absolute;left:568.50px;top:267.50px;width:162.50px;height:12.00px;line-height:12.00px;white-space:nowrap;text-align:center;font-size:5.2px;color:#a0a8b4;">WEEK 25</div>
<div style="position:absolute;left:731.00px;top:256.00px;width:91.20px;height:11.50px;line-height:11.50px;white-space:nowrap;text-align:center;font-size:5.2px;color:#a0a8b4;">JUNE 2022</div>
<div style="position:absolute;left:731.00px;top:267.50px;width:91.20px;height:12.00px;line-height:12.00px;white-space:nowrap;text-align:center;font-size:5.2px;color:#a0a8b4;">WEEK 26</div>
<div style="position:absolute;left:138.50px;top:281.70px;width:22.56px;height:11.50px;line-height:11.50px;white-space:nowrap;text-align:center;font-size:5.4px;color:#b0b7c2;">1 Wed</div>
<div style="position:absolute;left:161.06px;top:281.70px;width:22.56px;height:11.50px;line-height:11.50px;white-space:nowrap;text-align:center;font-size:5.4px;color:#b0b7c2;">2 Thu</div>
<div style="position:absolute;left:183.62px;top:281.70px;width:22.56px;height:11.50px;line-height:11.50px;white-space:nowrap;text-align:center;font-size:5.4px;color:#b0b7c2;">3 Fri</div>
<div style="position:absolute;left:206.18px;top:281.70px;width:22.56px;height:11.50px;line-height:11.50px;white-space:nowrap;text-align:center;font-size:5.4px;color:#b0b7c2;">4 Sat</div>
<div style="position:absolute;left:228.74px;top:281.70px;width:22.56px;height:11.50px;line-height:11.50px;white-space:nowrap;text-align:center;font-size:5.4px;color:#b0b7c2;">5 Sun</div>
<div style="position:absolute;left:251.30px;top:281.70px;width:22.57px;height:11.50px;line-height:11.50px;white-space:nowrap;text-align:center;font-size:5.4px;color:#b0b7c2;">6 Mon</div>
<div style="position:absolute;left:273.87px;top:281.70px;width:22.57px;height:11.50px;line-height:11.50px;white-space:nowrap;text-align:center;font-size:5.4px;color:#b0b7c2;">7 Tue</div>
<div style="position:absolute;left:296.44px;top:281.70px;width:22.57px;height:11.50px;line-height:11.50px;white-space:nowrap;text-align:center;font-size:5.4px;color:#b0b7c2;">8 Wed</div>
<div style="position:absolute;left:319.01px;top:281.70px;width:22.57px;height:11.50px;line-height:11.50px;white-space:nowrap;text-align:center;font-size:5.4px;color:#b0b7c2;">9 Thu</div>
<div style="position:absolute;left:341.59px;top:281.70px;width:22.57px;height:11.50px;line-height:11.50px;white-space:nowrap;text-align:center;font-size:5.4px;color:#b0b7c2;">10 Fri</div>
<div style="position:absolute;left:364.16px;top:281.70px;width:22.57px;height:11.50px;line-height:11.50px;white-space:nowrap;text-align:center;font-size:5.4px;color:#b0b7c2;">11 Sat</div>
<div style="position:absolute;left:386.73px;top:281.70px;width:22.57px;height:11.50px;line-height:11.50px;white-space:nowrap;text-align:center;font-size:5.4px;color:#b0b7c2;">12 Sun</div>
<div style="position:absolute;left:409.30px;top:281.70px;width:22.74px;height:11.50px;line-height:11.50px;white-space:nowrap;text-align:center;font-size:5.4px;color:#b0b7c2;">13 Mon</div>
<div style="position:absolute;left:432.04px;top:281.70px;width:22.74px;height:11.50px;line-height:11.50px;white-space:nowrap;text-align:center;font-size:5.4px;color:#b0b7c2;">14 Tue</div>
<div style="position:absolute;left:454.79px;top:281.70px;width:22.74px;height:11.50px;line-height:11.50px;white-space:nowrap;text-align:center;font-size:5.4px;color:#b0b7c2;">15 Wed</div>
<div style="position:absolute;left:477.53px;top:281.70px;width:22.74px;height:11.50px;line-height:11.50px;white-space:nowrap;text-align:center;font-size:5.4px;color:#b0b7c2;">16 Thu</div>
<div style="position:absolute;left:500.27px;top:281.70px;width:22.74px;height:11.50px;line-height:11.50px;white-space:nowrap;text-align:center;font-size:5.4px;color:#b0b7c2;">17 Fri</div>
<div style="position:absolute;left:523.01px;top:281.70px;width:22.74px;height:11.50px;line-height:11.50px;white-space:nowrap;text-align:center;font-size:5.4px;color:#b0b7c2;">18 Sat</div>
<div style="position:absolute;left:545.76px;top:281.70px;width:22.74px;height:11.50px;line-height:11.50px;white-space:nowrap;text-align:center;font-size:5.4px;color:#b0b7c2;">19 Sun</div>
<div style="position:absolute;left:568.50px;top:281.70px;width:23.21px;height:11.50px;line-height:11.50px;white-space:nowrap;text-align:center;font-size:5.4px;color:#b0b7c2;">20 Mon</div>
<div style="position:absolute;left:591.71px;top:281.70px;width:23.21px;height:11.50px;line-height:11.50px;white-space:nowrap;text-align:center;font-size:5.6px;color:#5e4db2;font-weight:bold;">21 Tue</div>
<div style="position:absolute;left:614.93px;top:281.70px;width:23.21px;height:11.50px;line-height:11.50px;white-space:nowrap;text-align:center;font-size:5.4px;color:#b0b7c2;">22 Wed</div>
<div style="position:absolute;left:638.14px;top:281.70px;width:23.21px;height:11.50px;line-height:11.50px;white-space:nowrap;text-align:center;font-size:5.4px;color:#b0b7c2;">23 Thu</div>
<div style="position:absolute;left:661.36px;top:281.70px;width:23.21px;height:11.50px;line-height:11.50px;white-space:nowrap;text-align:center;font-size:5.4px;color:#b0b7c2;">24 Fri</div>
<div style="position:absolute;left:684.57px;top:281.70px;width:23.21px;height:11.50px;line-height:11.50px;white-space:nowrap;text-align:center;font-size:5.4px;color:#b0b7c2;">25 Sat</div>
<div style="position:absolute;left:707.79px;top:281.70px;width:23.21px;height:11.50px;line-height:11.50px;white-space:nowrap;text-align:center;font-size:5.4px;color:#b0b7c2;">26 Sun</div>
<div style="position:absolute;left:731.00px;top:281.70px;width:22.80px;height:11.50px;line-height:11.50px;white-space:nowrap;text-align:center;font-size:5.4px;color:#b0b7c2;">27 Mon</div>
<div style="position:absolute;left:753.80px;top:281.70px;width:22.80px;height:11.50px;line-height:11.50px;white-space:nowrap;text-align:center;font-size:5.4px;color:#b0b7c2;">28 Tue</div>
<div style="position:absolute;left:776.60px;top:281.70px;width:22.80px;height:11.50px;line-height:11.50px;white-space:nowrap;text-align:center;font-size:5.4px;color:#b0b7c2;">29 Wed</div>
<div style="position:absolute;left:799.40px;top:281.70px;width:22.80px;height:11.50px;line-height:11.50px;white-space:nowrap;text-align:center;font-size:5.4px;color:#b0b7c2;">30 Thu</div>
<div style="position:absolute;left:41.20px;top:292.60px;width:40.00px;height:11.00px;line-height:11.00px;white-space:nowrap;font-size:6.5px;font-weight:bold;color:#253858;">Summary</div>
<div style="position:absolute;left:124.9px;top:293.7px;width:9px;height:4.7px;border-radius:1px;background:#e1e3e8"><div style="position:absolute;left:4px;top:1.3px;width:4px;height:2.1px;background:#fff;border-radius:0.5px"></div></div>
<div style="position:absolute;left:39.00px;top:307.20px;width:100.00px;height:0.80px;background:#f0f1f4"></div>
<div style="position:absolute;left:48px;top:312.4px;width:7.6px;height:7.6px;border-radius:50%;background:#7a869a;color:#fff;font-size:5.5px;font-weight:bold;line-height:7.6px;text-align:center">U</div>
<div style="position:absolute;left:57.70px;top:311.00px;width:50.00px;height:11.00px;line-height:11.00px;white-space:nowrap;font-size:6.85px;color:#253858;">Unspecified</div>
<div style="position:absolute;left:124.9px;top:311.09999999999997px;width:9px;height:4.7px;border-radius:1px;background:#e1e3e8"><div style="position:absolute;left:4px;top:1.3px;width:4px;height:2.1px;background:#fff;border-radius:0.5px"></div></div>
<div style="position:absolute;left:39.00px;top:325.00px;width:100.00px;height:0.80px;background:#f0f1f4"></div>
<div style="position:absolute;left:48px;top:330px;width:7.6px;height:7.6px;border-radius:50%;background:#36b37e"></div>
<div style="position:absolute;left:57.70px;top:328.50px;width:50.00px;height:11.00px;line-height:11.00px;white-space:nowrap;font-size:6.85px;color:#253858;">Architect</div>
<div style="position:absolute;left:124.9px;top:328.59999999999997px;width:9px;height:4.7px;border-radius:1px;background:#e1e3e8"><div style="position:absolute;left:4px;top:1.3px;width:4px;height:2.1px;background:#fff;border-radius:0.5px"></div></div>
<div style="position:absolute;left:39.00px;top:342.60px;width:100.00px;height:0.80px;background:#f0f1f4"></div>
<div style="position:absolute;left:124.9px;top:346.2px;width:9px;height:4.7px;border-radius:1px;background:#e1e3e8"><div style="position:absolute;left:4px;top:1.3px;width:4px;height:2.1px;background:#fff;border-radius:0.5px"></div></div>
<div style="position:absolute;left:39.00px;top:360.20px;width:100.00px;height:0.80px;background:#f0f1f4"></div>
<div style="position:absolute;left:124.9px;top:363.79999999999995px;width:9px;height:4.7px;border-radius:1px;background:#e1e3e8"><div style="position:absolute;left:4px;top:1.3px;width:4px;height:2.1px;background:#fff;border-radius:0.5px"></div></div>
<div style="position:absolute;left:138.50px;top:307.20px;width:683.70px;height:0.80px;background:#f0f1f4"></div>
<div style="position:absolute;left:138.50px;top:325.00px;width:683.70px;height:0.80px;background:#f0f1f4"></div>
<div style="position:absolute;left:138.50px;top:342.60px;width:683.70px;height:0.80px;background:#f0f1f4"></div>
<div style="position:absolute;left:138.50px;top:360.20px;width:683.70px;height:0.80px;background:#f0f1f4"></div>
<div style="position:absolute;left:141.70px;top:292.20px;width:107.20px;height:9.5px;line-height:9.5px;background:#41a31b;border-radius:2px;color:#fff;font-size:6px;font-weight:normal;text-align:center;text-indent:0;padding-top:0.6px;box-sizing:border-box;white-space:nowrap;-webkit-text-stroke:0.2px #fff">120.0</div>
<div style="position:absolute;left:255.90px;top:292.20px;width:150.10px;height:9.5px;line-height:9.5px;background:#41a31b;border-radius:2px;color:#fff;font-size:6px;font-weight:normal;text-align:center;text-indent:0;padding-top:0.6px;box-sizing:border-box;white-space:nowrap;-webkit-text-stroke:0.2px #fff">208.0</div>
<div style="position:absolute;left:414.20px;top:292.20px;width:149.80px;height:9.5px;line-height:9.5px;background:#41a31b;border-radius:2px;color:#fff;font-size:6px;font-weight:normal;text-align:center;text-indent:0;padding-top:0.6px;box-sizing:border-box;white-space:nowrap;-webkit-text-stroke:0.2px #fff">184.3</div>
<div style="position:absolute;left:573.10px;top:292.20px;width:152.60px;height:9.5px;line-height:9.5px;background:#41a31b;border-radius:2px;color:#fff;font-size:6px;font-weight:normal;text-align:center;text-indent:0;padding-top:0.6px;box-sizing:border-box;white-space:nowrap;-webkit-text-stroke:0.2px #fff">181.6</div>
<div style="position:absolute;left:733.00px;top:292.20px;width:87.20px;height:9.5px;line-height:9.5px;background:#41a31b;border-radius:2px;color:#fff;font-size:6px;font-weight:normal;text-align:center;text-indent:0;padding-top:0.6px;box-sizing:border-box;white-space:nowrap;-webkit-text-stroke:0.2px #fff">173.1</div>
<div style="position:absolute;left:141.70px;top:310.30px;width:107.20px;height:9.3px;line-height:9.3px;background:#41a31b;border-radius:2px;color:#fff;font-size:6.0px;font-weight:normal;text-align:center;text-indent:0;padding-top:0.6px;box-sizing:border-box;white-space:nowrap;">48.0</div>
<div style="position:absolute;left:255.90px;top:310.30px;width:150.10px;height:9.3px;line-height:9.3px;background:#41a31b;border-radius:2px;color:#fff;font-size:6.0px;font-weight:normal;text-align:center;text-indent:0;padding-top:0.6px;box-sizing:border-box;white-space:nowrap;">80.0</div>
<div style="position:absolute;left:414.20px;top:310.30px;width:149.80px;height:9.3px;line-height:9.3px;background:#41a31b;border-radius:2px;color:#fff;font-size:6.0px;font-weight:normal;text-align:center;text-indent:0;padding-top:0.6px;box-sizing:border-box;white-space:nowrap;">80.0</div>
<div style="position:absolute;left:573.10px;top:310.30px;width:152.60px;height:9.3px;line-height:9.3px;background:#41a31b;border-radius:2px;color:#fff;font-size:6.0px;font-weight:normal;text-align:center;text-indent:0;padding-top:0.6px;box-sizing:border-box;white-space:nowrap;">80.0</div>
<div style="position:absolute;left:733.00px;top:310.30px;width:87.20px;height:9.3px;line-height:9.3px;background:#41a31b;border-radius:2px;color:#fff;font-size:6.0px;font-weight:normal;text-align:center;text-indent:0;padding-top:0.6px;box-sizing:border-box;white-space:nowrap;">64.0</div>
<div style="position:absolute;left:141.70px;top:327.70px;width:107.20px;height:9.3px;line-height:9.3px;background:#41a31b;border-radius:2px;color:#fff;font-size:6.0px;font-weight:normal;text-align:center;text-indent:0;padding-top:0.6px;box-sizing:border-box;white-space:nowrap;">28.4</div>
<div style="position:absolute;left:255.90px;top:327.70px;width:150.10px;height:9.3px;line-height:9.3px;background:#41a31b;border-radius:2px;color:#fff;font-size:6.0px;font-weight:normal;text-align:center;text-indent:0;padding-top:0.6px;box-sizing:border-box;white-space:nowrap;">53.8</div>
<div style="position:absolute;left:414.20px;top:327.70px;width:149.80px;height:9.3px;line-height:9.3px;background:#41a31b;border-radius:2px;color:#fff;font-size:6.0px;font-weight:normal;text-align:center;text-indent:0;padding-top:0.6px;box-sizing:border-box;white-space:nowrap;">52.9</div>
<div style="position:absolute;left:573.10px;top:327.70px;width:152.60px;height:9.3px;line-height:9.3px;background:#41a31b;border-radius:2px;color:#fff;font-size:6.0px;font-weight:normal;text-align:center;text-indent:0;padding-top:0.6px;box-sizing:border-box;white-space:nowrap;">66.6</div>
<div style="position:absolute;left:733.00px;top:327.70px;width:87.20px;height:9.3px;line-height:9.3px;background:#41a31b;border-radius:2px;color:#fff;font-size:6.0px;font-weight:normal;text-align:center;text-indent:0;padding-top:0.6px;box-sizing:border-box;white-space:nowrap;">64.0</div>
<div style="position:absolute;left:141.70px;top:345.70px;width:107.20px;height:9.3px;line-height:9.3px;background:#41a31b;border-radius:2px;color:#fff;font-size:6.0px;font-weight:normal;text-align:center;text-indent:0;padding-top:0.6px;box-sizing:border-box;white-space:nowrap;">24.0</div>
<div style="position:absolute;left:255.90px;top:345.70px;width:150.10px;height:9.3px;line-height:9.3px;background:#41a31b;border-radius:2px;color:#fff;font-size:6.0px;font-weight:normal;text-align:center;text-indent:0;padding-top:0.6px;box-sizing:border-box;white-space:nowrap;">40.0</div>
<div style="position:absolute;left:414.20px;top:345.70px;width:149.80px;height:9.3px;line-height:9.3px;background:#41a31b;border-radius:2px;color:#fff;font-size:6.0px;font-weight:normal;text-align:center;text-indent:0;padding-top:0.6px;box-sizing:border-box;white-space:nowrap;">40.0</div>
<div style="position:absolute;left:573.10px;top:345.70px;width:152.60px;height:9.3px;line-height:9.3px;background:#41a31b;border-radius:2px;color:#fff;font-size:6.0px;font-weight:normal;text-align:center;text-indent:0;padding-top:0.6px;box-sizing:border-box;white-space:nowrap;">40.0</div>
<div style="position:absolute;left:733.00px;top:345.70px;width:87.20px;height:9.3px;line-height:9.3px;background:#41a31b;border-radius:2px;color:#fff;font-size:6.0px;font-weight:normal;text-align:center;text-indent:0;padding-top:0.6px;box-sizing:border-box;white-space:nowrap;">32.0</div>
<div style="position:absolute;left:141.70px;top:363.00px;width:107.20px;height:9.3px;line-height:9.3px;background:#41a31b;border-radius:2px;color:#fff;font-size:6.0px;font-weight:normal;text-align:center;text-indent:0;padding-top:0.6px;box-sizing:border-box;white-space:nowrap;">24.0</div>
<div style="position:absolute;left:255.90px;top:363.00px;width:150.10px;height:9.3px;line-height:9.3px;background:#41a31b;border-radius:2px;color:#fff;font-size:6.0px;font-weight:normal;text-align:center;text-indent:0;padding-top:0.6px;box-sizing:border-box;white-space:nowrap;">40.0</div>
<div style="position:absolute;left:414.20px;top:363.00px;width:149.80px;height:9.3px;line-height:9.3px;background:#41a31b;border-radius:2px;color:#fff;font-size:6.0px;font-weight:normal;text-align:center;text-indent:0;padding-top:0.6px;box-sizing:border-box;white-space:nowrap;">11.4</div>
<div style="position:absolute;left:573.10px;top:363.00px;width:152.60px;height:9.3px;line-height:9.3px;background:#ff5630;border-radius:2px;color:#fff;font-size:6.0px;font-weight:normal;text-align:center;text-indent:0;padding-top:0.6px;box-sizing:border-box;white-space:nowrap;">-7.0</div>
<div style="position:absolute;left:733.00px;top:363.00px;width:87.20px;height:9.3px;line-height:9.3px;background:#41a31b;border-radius:2px;color:#fff;font-size:6.0px;font-weight:normal;text-align:center;text-indent:0;padding-top:0.6px;box-sizing:border-box;white-space:nowrap;">13.1</div>
<div style="position:absolute;left:822.10px;top:289.80px;width:9.50px;height:84.50px;background:#f1f1f1"></div>
<div style="position:absolute;left:822.60px;top:300.50px;width:8.50px;height:61.90px;background:#c1c1c1"></div>
<svg style="position:absolute;left:824.3px;top:294.4px" width="4.6" height="2.6" viewBox="0 0 10 6"><path d="M0 6 L5 0.5 L10 6Z" fill="#606060"/></svg>
<svg style="position:absolute;left:824.3px;top:368.2px" width="4.6" height="2.6" viewBox="0 0 10 6"><path d="M0 0 L5 5.5 L10 0Z" fill="#606060"/></svg>
<div style="position:absolute;left:0;top:0;width:860px;height:400px;overflow:hidden;"><div style="position:absolute;left:7.2px;top:332.5px;width:134px;height:58.3px;background:#fff;border-radius:0 36px 0 20px;box-shadow:1px -1px 6px rgba(0,0,0,0.16)"></div></div>
<svg style="position:absolute;left:21px;top:347.8px" width="21" height="23" viewBox="0 0 21 23"><path d="M10.5 1.2 L19.6 6.5 V16.5 L10.5 21.8 L1.4 16.5 V6.5Z" fill="#e6194f" stroke="#e6194f" stroke-width="1.2" stroke-linejoin="round"/><path d="M10.5 6.1 L15.3 8.9 V14.1 L10.5 16.9 L5.7 14.1 V8.9Z" fill="#fff"/><path d="M10.5 1.2 L19.6 6.5 L15.3 8.9 L10.5 6.1Z" fill="#ee2a5e" opacity="0.6"/></svg>
<div style="position:absolute;left:45.40px;top:349.50px;width:80.00px;height:20.00px;line-height:20.00px;white-space:nowrap;font-size:15.3px;color:#2b2f3a;letter-spacing:0.5px;-webkit-text-stroke:0.4px #2b2f3a">BigPicture</div>
</body></html>
